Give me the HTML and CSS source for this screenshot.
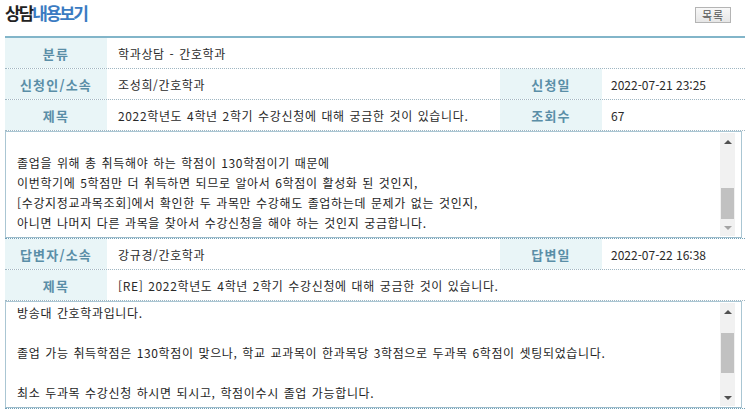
FILE: index.html
```html
<!DOCTYPE html>
<html lang="ko">
<head>
<meta charset="utf-8">
<title>상담내용보기</title>
<link rel="stylesheet" href="styles.css">
</head>
<body>
<div class="page">
  <header class="head">
    <h1 class="title"><span class="title-dark">상담</span><span class="title-blue">내용보기</span></h1>
    <button class="btn-list" type="button">목록</button>
  </header>

  <section class="board">
    <div class="row">
      <div class="lbl">분류</div>
      <div class="val val-wide">학과상담 - 간호학과</div>
    </div>
    <div class="row">
      <div class="lbl">신청인/소속</div>
      <div class="val">조성희/간호학과</div>
      <div class="lbl">신청일</div>
      <div class="val val-side">2022-07-21 23:25</div>
    </div>
    <div class="row">
      <div class="lbl">제목</div>
      <div class="val">2022학년도 4학년 2학기 수강신청에 대해 궁금한 것이 있습니다.</div>
      <div class="lbl">조회수</div>
      <div class="val val-side">67</div>
    </div>
    <div class="box-row">
      <div class="box">
        <div class="box-text">
          <p class="line">&nbsp;</p>
          <p class="line">졸업을 위해 총 취득해야 하는 학점이 130학점이기 때문에</p>
          <p class="line">이번학기에 5학점만 더 취득하면 되므로 알아서 6학점이 활성화 된 것인지,</p>
          <p class="line">[수강지정교과목조회]에서 확인한 두 과목만 수강해도 졸업하는데 문제가 없는 것인지,</p>
          <p class="line">아니면 나머지 다른 과목을 찾아서 수강신청을 해야 하는 것인지 궁금합니다.</p>
        </div>
        <div class="sbar">
          <div class="sbtn"><span class="arr arr-up"></span></div>
          <div class="strack"><div class="thumb thumb-end"></div></div>
          <div class="sbtn"><span class="arr arr-down arr-off"></span></div>
        </div>
      </div>
    </div>

    <div class="row">
      <div class="lbl">답변자/소속</div>
      <div class="val">강규경/간호학과</div>
      <div class="lbl">답변일</div>
      <div class="val val-side">2022-07-22 16:38</div>
    </div>
    <div class="row">
      <div class="lbl">제목</div>
      <div class="val val-wide">[RE] 2022학년도 4학년 2학기 수강신청에 대해 궁금한 것이 있습니다.</div>
    </div>
    <div class="box-row">
      <div class="box">
        <div class="box-text">
          <p class="line">방송대 간호학과입니다.</p>
          <p class="line">&nbsp;</p>
          <p class="line">졸업 가능 취득학점은 130학점이 맞으나, 학교 교과목이 한과목당 3학점으로 두과목 6학점이 셋팅되었습니다.</p>
          <p class="line">&nbsp;</p>
          <p class="line">최소 두과목 수강신청 하시면 되시고, 학점이수시 졸업 가능합니다.</p>
        </div>
        <div class="sbar">
          <div class="sbtn"><span class="arr arr-up"></span></div>
          <div class="strack"><div class="thumb thumb-mid"></div></div>
          <div class="sbtn"><span class="arr arr-down"></span></div>
        </div>
      </div>
    </div>
  </section>
</div>
</body>
</html>
```

FILE: styles.css
```css
* { box-sizing: border-box; }

html, body {
  margin: 0;
  padding: 0;
  background: #ffffff;
}

body {
  font-family: "Noto Sans CJK KR", "Noto Sans", sans-serif;
  font-size: 12px;
  color: #333333;
}

.page {
  padding: 0 5px;
}

/* header */
.head {
  height: 36px;
  display: flex;
  justify-content: space-between;
  align-items: flex-start;
  padding: 0 14px 0 0;
}

.title {
  margin: 2px 0 0 0;
  font-size: 17px;
  font-weight: 700;
  letter-spacing: -2px;
  line-height: 22px;
}

.title-dark { color: #222222; }
.title-blue { color: #3a7bc2; }

.btn-list {
  margin-top: 7px;
  width: 36px;
  height: 16px;
  padding: 0;
  font-family: inherit;
  font-size: 11px;
  line-height: 14px;
  letter-spacing: 1px;
  color: #555555;
  background: linear-gradient(#f8f8f8, #e6e6e6);
  border: 1px solid #b4b4b4;
  border-radius: 0;
}

/* board */
.board {
  border-top: 2px solid #82b5c9;
}

.row {
  display: grid;
  grid-template-columns: 102px 393px 102px 1fr;
  height: 31px;
  border-bottom: 1px dotted #9fb6c2;
}

.lbl {
  background: #e9f5f7;
  color: #5a8ea7;
  font-weight: 700;
  font-size: 13px;
  letter-spacing: 1.2px;
  display: flex;
  align-items: center;
  justify-content: center;
}

.val {
  display: flex;
  align-items: center;
  padding-left: 11px;
  white-space: nowrap;
  color: #2a2a2a;
  letter-spacing: 0.65px;
  word-spacing: 0.8px;
}

.val-side {
  padding-left: 9px;
  letter-spacing: 0;
  word-spacing: 0;
}

.val-wide { grid-column: 2 / 5; }

/* text box */
.box-row {
  border-bottom: 1px dotted #6f9fb6;
  padding-right: 3px;
}

.box {
  display: flex;
  height: 107px;
  border: 1px solid #aac6d3;
  border-bottom-color: #9dbccb;
  padding: 1px 6px 1px 11px;
}

.box-text {
  flex: 1;
  overflow: hidden;
}

.line {
  margin: 0;
  height: 20px;
  line-height: 20px;
  white-space: nowrap;
  color: #1e1e1e;
  letter-spacing: 0.65px;
  word-spacing: 0.8px;
}

/* fake scrollbar */
.sbar {
  width: 15px;
  display: flex;
  flex-direction: column;
  background: #f1f1f1;
}

.sbtn {
  height: 17px;
  display: flex;
  align-items: center;
  justify-content: center;
}

.arr {
  width: 0;
  height: 0;
  border-left: 4px solid transparent;
  border-right: 4px solid transparent;
}

.arr-up { border-bottom: 4px solid #505050; }
.arr-down { border-top: 4px solid #505050; }
.arr-off { border-top-color: #a3a3a3; }

.strack {
  flex: 1;
  display: flex;
  flex-direction: column;
}

.thumb {
  background: #c1c1c1;
  margin: 0 1px;
}

.thumb-end {
  margin-top: auto;
  height: 31px;
}

.thumb-mid {
  margin-top: 13px;
  height: 40px;
}
```
